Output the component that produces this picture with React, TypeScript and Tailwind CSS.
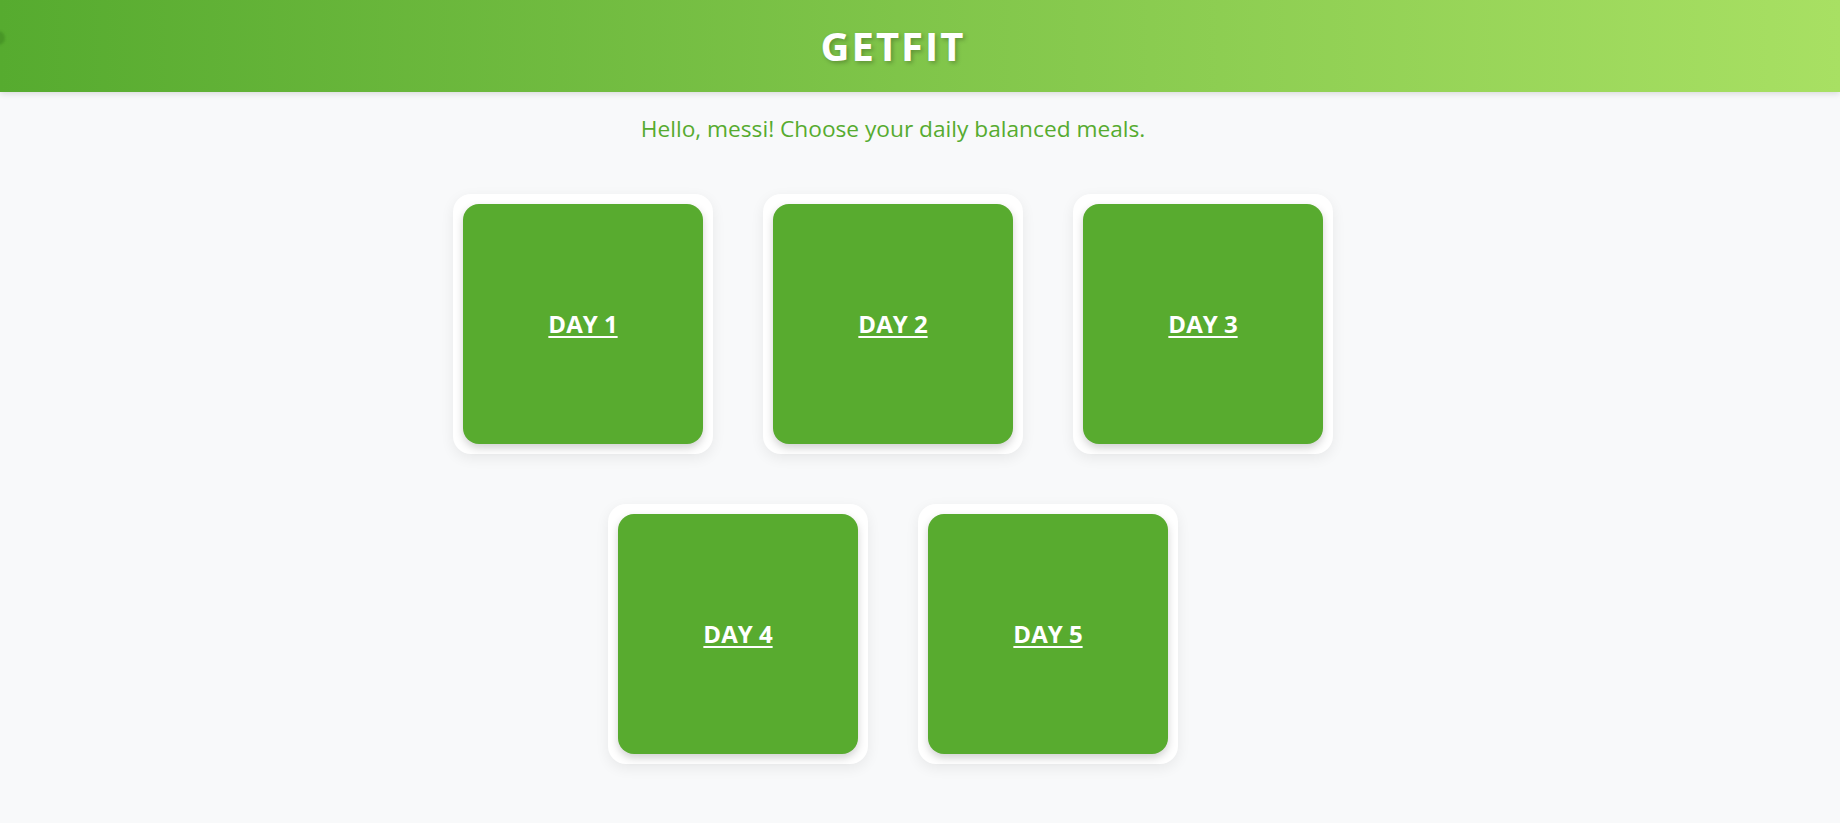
import React from "react";

const days = ["DAY 1", "DAY 2", "DAY 3", "DAY 4", "DAY 5"];

export default function App() {
  return (
    <div
      className="min-h-[823px] bg-[#f8f9fa] relative overflow-hidden"
      style={{ fontFamily: '"Open Sans", "Noto Sans", sans-serif' }}
    >
      <header className="relative h-[92px] bg-linear-to-r from-[#56ab2f] to-[#a8e063] shadow-[0_2px_6px_rgba(0,0,0,0.12)] flex items-center justify-center pr-[54px]">
        <div className="absolute left-[-9px] top-[31px] w-[14px] h-[14px] rounded-full bg-[#3f8a22]/60 blur-[1px]" />
        <h1 className="text-white font-bold text-[40px] tracking-[2px] leading-none [text-shadow:2px_2px_4px_rgba(0,0,0,0.25)]">
          GETFIT
        </h1>
      </header>
      <main className="pr-[54px]">
        <p className="mt-[20px] text-center text-[22.7px] leading-[34px] text-[#56ab2f]">
          Hello, messi! Choose your daily balanced meals.
        </p>
        <div className="mt-[48px] mx-auto max-w-[880px] flex flex-wrap justify-center gap-[50px]">
          {days.map((d) => (
            <div
              key={d}
              className="w-[260px] h-[260px] p-[10px] bg-white rounded-[18px] shadow-[0_4px_14px_rgba(0,0,0,0.07)]"
            >
              <a
                href="#"
                className="w-full h-full flex items-center justify-center rounded-[16px] bg-[#58ab2f] shadow-[0_4px_8px_rgba(0,0,0,0.18)] text-white font-bold text-[24px] underline underline-offset-[3px] decoration-2"
              >
                {d}
              </a>
            </div>
          ))}
        </div>
      </main>
    </div>
  );
}
